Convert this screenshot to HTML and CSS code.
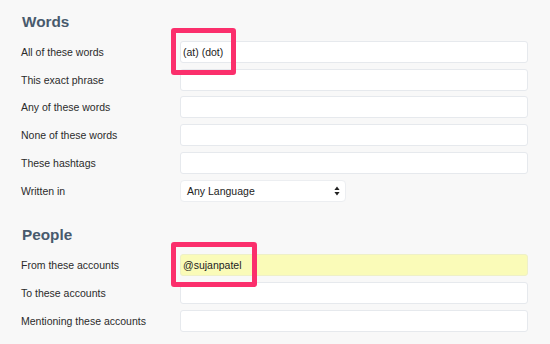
FILE: index.html
```html
<!DOCTYPE html>
<html>
<head>
<meta charset="utf-8">
<link rel="stylesheet" href="styles.css">
</head>
<body>
<div class="page">
  <section class="section">
    <h2 class="heading">Words</h2>
    <div class="rows">
      <div class="row"><span class="label">All of these words</span>
        <div class="field"><div class="input">(at) (dot)</div><div class="mark mark-words"></div></div></div>
      <div class="row"><span class="label">This exact phrase</span><div class="field"><div class="input"></div></div></div>
      <div class="row"><span class="label">Any of these words</span><div class="field"><div class="input"></div></div></div>
      <div class="row"><span class="label">None of these words</span><div class="field"><div class="input"></div></div></div>
      <div class="row"><span class="label">These hashtags</span><div class="field"><div class="input"></div></div></div>
      <div class="row"><span class="label">Written in</span>
        <div class="field"><div class="select"><span>Any Language</span>
          <svg class="arrows" width="6" height="10" viewBox="0 0 6 10"><path d="M3 0.5 L5.6 4 L0.4 4 Z M3 9.5 L5.6 6 L0.4 6 Z" fill="#222"/></svg>
        </div></div></div>
    </div>
  </section>
  <section class="section people">
    <h2 class="heading">People</h2>
    <div class="rows">
      <div class="row"><span class="label">From these accounts</span>
        <div class="field"><div class="input yellow">@sujanpatel</div><div class="mark mark-people"></div></div></div>
      <div class="row"><span class="label">To these accounts</span><div class="field"><div class="input"></div></div></div>
      <div class="row"><span class="label">Mentioning these accounts</span><div class="field"><div class="input"></div></div></div>
    </div>
  </section>
</div>
</body>
</html>
```
FILE: styles.css
```css
html, body { margin: 0; padding: 0; }
body {
  background: #f8f8f8;
  font-family: "Liberation Sans", Arial, sans-serif;
  width: 550px;
  height: 344px;
  overflow: hidden;
}
.page { padding: 12.75px 0 0 21px; }
.heading {
  margin: 0 0 10px 1px;
  font-size: 15.3px;
  line-height: 18px;
  font-weight: bold;
  color: #485a6d;
}
.people { margin-top: 24.3px; }
.rows { display: flex; flex-direction: column; gap: 5.75px; }
.row { display: flex; align-items: center; }
.label {
  width: 159px;
  font-size: 10.5px;
  color: #2b2b2b;
}
.field { position: relative; }
.input {
  box-sizing: border-box;
  width: 348px;
  height: 22px;
  background: #fff;
  border: 1px solid #e6e9ed;
  border-radius: 3px;
  padding: 0 2px;
  font-size: 10.5px;
  line-height: 20px;
  color: #222;
}
.yellow { background: #fafbb8; border-color: #eef0c8; }
.select {
  box-sizing: border-box;
  width: 166px;
  height: 22.7px;
  background: #fff;
  border: 1px solid #eceef1;
  border-radius: 4px;
  padding: 0 6px;
  font-size: 10.5px;
  color: #222;
  display: flex;
  align-items: center;
  justify-content: space-between;
}
.arrows { margin-right: -1px; }
.mark {
  position: absolute;
  z-index: 2;
  box-sizing: border-box;
  border: 5.5px solid #fb2f6c;
  border-radius: 3px;
}
.mark-words { left: -9px; top: -13px; width: 65px; height: 47px; }
.mark-people { left: -9px; top: -12.3px; width: 86px; height: 45px; }
```
